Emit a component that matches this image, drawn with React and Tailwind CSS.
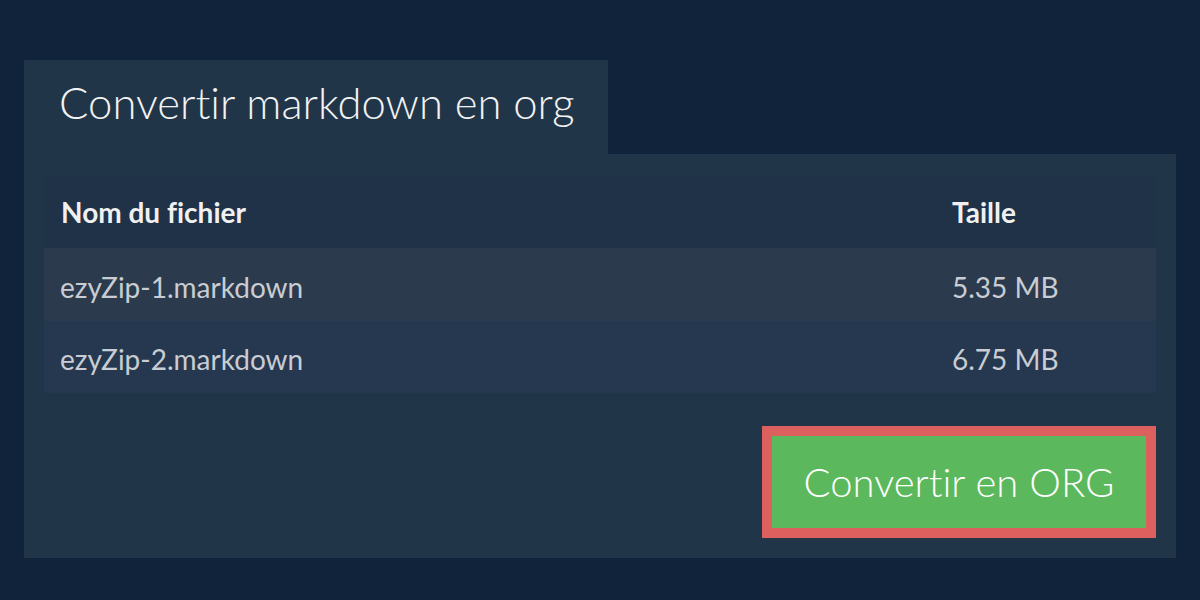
const files = [
  { name: "ezyZip-1.markdown", size: "5.35 MB" },
  { name: "ezyZip-2.markdown", size: "6.75 MB" },
];

export default function App() {
  return (
    <div
      className="h-[600px] w-[1200px] bg-[#10233a] px-6 pt-[60px]"
      style={{ fontFamily: "Lato, 'Open Sans', sans-serif", fontVariantLigatures: "none" }}
    >
      <div className="flex">
        <h1 className="h-[94px] w-[584px] bg-[#213549] pl-[35px] pt-[15px] text-[43.6px] font-light leading-[54px] text-[#f2f2f2]">
          Convertir markdown en org
        </h1>
      </div>

      <div className="h-[404px] bg-[#213549] px-5 pt-[22px]">
        <table className="w-full border-collapse text-left">
          <thead>
            <tr className="h-[72px] bg-[#1f3248] text-[28px] font-bold text-[#f0f0f0]">
              <th className="pl-[17px] font-bold">Nom du fichier</th>
              <th className="w-[204px] font-bold">Taille</th>
            </tr>
          </thead>
          <tbody className="text-[28px] text-[#c9cdd3]">
            {files.map((file, i) => (
              <tr
                key={file.name}
                className={i % 2 === 0 ? "h-[73px] bg-[#2b3b4d]" : "h-[72px] bg-[#253850]"}
              >
                <td className="pl-4 pt-1">{file.name}</td>
                <td className="pt-1">{file.size}</td>
              </tr>
            ))}
          </tbody>
        </table>

        <div className="mt-[33px] flex justify-end">
          <button
            type="button"
            className="h-[112px] w-[394px] border-[10px] border-[#dc605e] bg-[#5cb85c] text-[40px] font-light text-white"
          >
            Convertir en ORG
          </button>
        </div>
      </div>
    </div>
  );
}
